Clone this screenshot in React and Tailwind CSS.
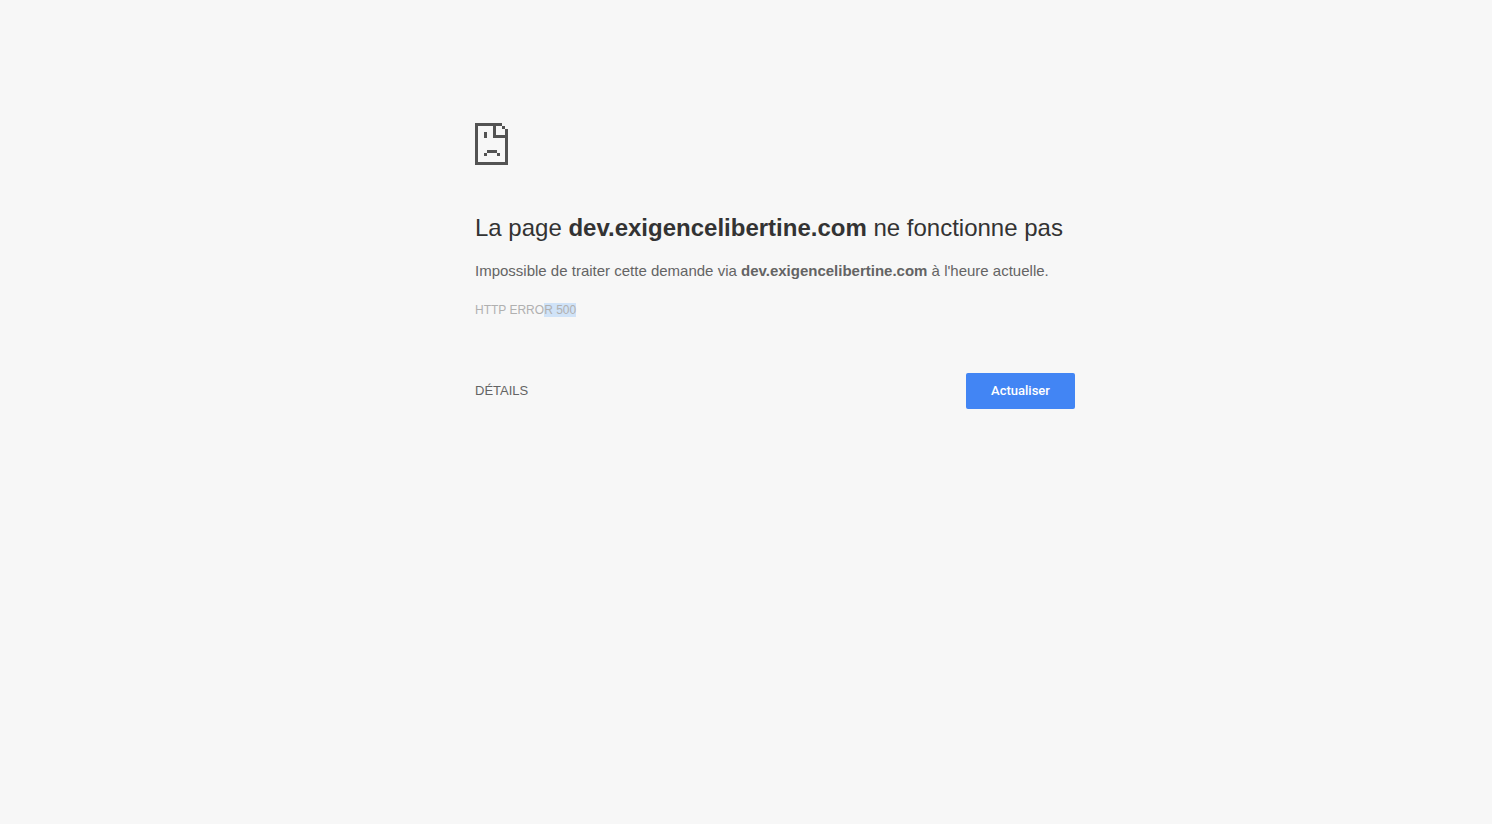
const HOST = 'dev.exigencelibertine.com';

/** Sad page glyph, drawn on a 1px grid so its edges stay crisp. */
function SadPageIcon() {
  return (
    <svg
      className="block h-[42px] w-[33px] text-[#535353]"
      viewBox="0 0 33 42"
      fill="currentColor"
      shapeRendering="crispEdges"
      aria-hidden="true"
    >
      {/* sheet outline */}
      <path d="M0 0h27v3H3v36h27V6h3v36H0z" />
      {/* folded corner */}
      <path d="M18 3h3v9h9v3H18zM27 3h3v3h-3z" />
      {/* eye and mouth */}
      <path d="M9 9h3v6H9zM12 27h10v3H12zM9 30h3v3H9zM22 30h3v3h-3z" />
    </svg>
  );
}

function App() {
  return (
    <div className="min-h-screen bg-[#f7f7f7] pl-[58px] font-['Liberation_Sans',Arial,sans-serif] text-[#646464]">
      <main className="mx-auto w-full max-w-[600px] pt-[123px]">
        <SadPageIcon />

        <h1 className="mt-12 text-[24px] leading-[30px] text-[#333333]">
          La page <strong className="font-bold">{HOST}</strong> ne fonctionne pas
        </h1>
        <p className="mt-4 text-[15px] leading-6">
          Impossible de traiter cette demande via <strong className="font-bold">{HOST}</strong> à l'heure actuelle.
        </p>
        <div className="mt-5 text-[12px] leading-[14px] text-[#b0b0b0]">
          HTTP ERRO<span className="inline-block bg-[#d0e3f8]">R 500</span>
        </div>

        <div className="mt-14 flex items-center justify-between text-[13px]">
          <button type="button" className="h-9">
            DÉTAILS
          </button>
          <button
            type="button"
            className="h-9 min-w-[109px] rounded-[2px] bg-[#4285f4] px-5 font-[Roboto,sans-serif] font-medium text-white"
          >
            Actualiser
          </button>
        </div>
      </main>
    </div>
  );
}

export default App;
